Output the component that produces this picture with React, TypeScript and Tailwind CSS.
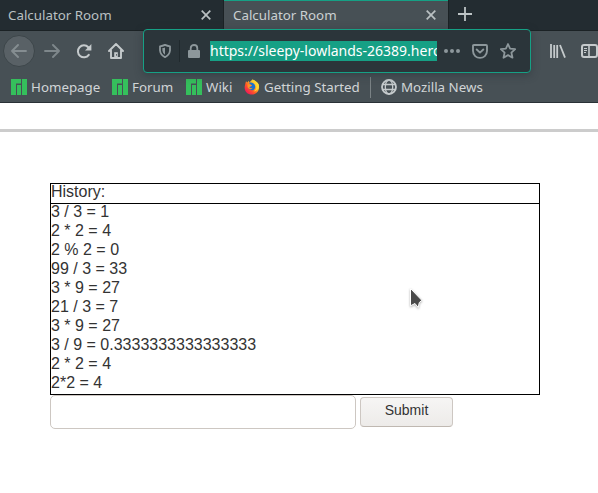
import React from "react";

const history: string[] = [
  "3 / 3 = 1",
  "2 * 2 = 4",
  "2 % 2 = 0",
  "99 / 3 = 33",
  "3 * 9 = 27",
  "21 / 3 = 7",
  "3 * 9 = 27",
  "3 / 9 = 0.3333333333333333",
  "2 * 2 = 4",
  "2*2 = 4",
];

function CloseIcon() {
  return (
    <svg width="10" height="10" viewBox="0 0 10 10" className="shrink-0" stroke="#b9c0c2" strokeWidth="1.7" fill="none">
      <path d="M0.7 0.7L9.3 9.3M9.3 0.7L0.7 9.3" />
    </svg>
  );
}

function ManjaroIcon() {
  return (
    <svg width="16" height="16" viewBox="0 0 16 16" className="shrink-0" fill="#35bf5c">
      <path d="M0 0H10V4.5H5V16H0ZM6 6H10V16H6ZM11 0H16V16H11Z" />
    </svg>
  );
}

function FirefoxIcon() {
  return (
    <svg width="16" height="16" viewBox="0 0 16 16" className="shrink-0">
      <defs>
        <linearGradient id="flame" x1="0.85" y1="0.1" x2="0.15" y2="0.85">
          <stop offset="0" stopColor="#fff044" />
          <stop offset="0.35" stopColor="#ffb52a" />
          <stop offset="0.65" stopColor="#ff5a25" />
          <stop offset="1" stopColor="#f21d55" />
        </linearGradient>
      </defs>
      <path d="M1.4 4.2L2 2.2L3.4 3.6L4.8 1.8L5.3 3.5L8.4 0.4C10 1 13.4 2.8 14.5 5.2C16.6 10.6 12.8 15.5 8 15.5C3 15.5 0.2 11.8 0.7 7.4Z" fill="url(#flame)" />
      <path d="M5.2 3.7C7.4 2.8 10.7 4 11.2 7C11.6 9.8 9.7 11.4 7.7 11.2C5.8 11 4.7 9.7 4.5 8.3L7.3 7.3L8 6.2L5.8 5.3Z" fill="#1871d2" />
      <path d="M3.5 5.2L6 5.5L7.6 6.1L6.7 7.2L5.3 8C5.8 9.4 7.2 9.4 8.7 8.7C7.8 10.6 4.7 10.8 3.6 8.1Z" fill="#ff9325" />
      <path d="M8.4 0.4C9 3 11.8 3.4 12.4 6.3C13 9.5 11.3 11.6 9.1 12.5C13 12.3 15.3 9.1 14.5 5.2C13.5 2.7 10.4 1.3 8.4 0.4Z" fill="#ffda33" />
    </svg>
  );
}

function Bookmark({ icon, label, className }: { icon: React.ReactNode; label: string; className: string }) {
  return (
    <div className={`flex shrink-0 items-center gap-1 ${className}`}>
      {icon}
      <span className="whitespace-nowrap">{label}</span>
    </div>
  );
}

function Tabs() {
  return (
    <div className="flex h-[31px] border-b border-[#1b2225] bg-[#232c31]">
      <div className="flex w-[224px] items-center justify-between border-r border-[#1b2225] pr-3 pl-2">
        <span>Calculator Room</span>
        <CloseIcon />
      </div>
      <div className="flex w-[224px] items-center justify-between border-t border-[#16a085] bg-[#475055] pr-3 pb-px pl-[9px]">
        <span className="text-[#cbd0d2]">Calculator Room</span>
        <CloseIcon />
      </div>
      <div className="flex w-[33px] items-center justify-center border-l border-[#1b2225] pb-[2px]">
        <svg width="14" height="14" viewBox="0 0 14 14" stroke="#bdc4c6" strokeWidth="1.8">
          <path d="M0 7H14M7 0V14" />
        </svg>
      </div>
    </div>
  );
}

function AddressBar() {
  return (
    <div className="relative -mt-[2px] flex h-11 w-[388px] shrink-0 items-center rounded-[4px] border border-[#16a085] bg-[#2b353a] pl-[15px] shadow-[0_2px_9px_rgba(35,44,49,0.45)]">
      <svg width="12" height="14" viewBox="0 0 12 14" fill="none">
        <path d="M1 2.3Q3.7 2 6 0.9Q8.3 2 11 2.3V6.5Q10.5 11 6 13.2Q1.5 11 1 6.5Z" stroke="#8d979b" strokeWidth="1.8" strokeLinejoin="round" />
        <path d="M6 3.4V10.8Q3.7 9.2 3.4 6.4V4.1Q4.8 3.9 6 3.4Z" fill="#8d979b" />
      </svg>
      <div className="ml-2 h-[22px] w-px bg-[#20292d]" />
      <svg width="12" height="14" viewBox="0 0 12 14" className="ml-2" fill="none">
        <rect x="0" y="6" width="12" height="8" rx="1" fill="#8d979b" />
        <path d="M2.7 7V4.2C2.7 -0.1 9.3 -0.1 9.3 4.2V7" stroke="#8d979b" strokeWidth="1.8" />
      </svg>
      <div className="ml-[10px] h-5 w-[227px] overflow-hidden bg-[#16a085] text-[14px] leading-5 whitespace-nowrap text-white">
        https://sleepy-lowlands-26389.herokuapp.com
      </div>
      <svg width="16" height="4" viewBox="0 0 16 4" className="ml-[7px]" fill="#8d979b">
        <circle cx="2" cy="2" r="2" />
        <circle cx="8" cy="2" r="2" />
        <circle cx="14" cy="2" r="2" />
      </svg>
      <svg width="16" height="15" viewBox="0 0 16 15" className="ml-3" fill="none" stroke="#8d979b" strokeWidth="1.9" strokeLinecap="round" strokeLinejoin="round">
        <path d="M2 1H14Q15 1 15 2V6.8C15 16.2 1 16.2 1 6.8V2Q1 1 2 1Z" />
        <path d="M4.7 5.5L8 8.6L11.3 5.5" />
      </svg>
      <svg width="16" height="16" viewBox="0 0 16 16" className="ml-3" fill="none" stroke="#8d979b" strokeWidth="1.8" strokeLinejoin="round">
        <path d="M8 1L10.1 5.6L15.2 6.2L11.4 9.6L12.5 14.7L8 12.1L3.5 14.7L4.6 9.6L0.8 6.2L5.9 5.6Z" />
      </svg>
    </div>
  );
}

function Toolbar() {
  return (
    <div className="flex h-[41px] items-start bg-[#475055]">
      <div className="mt-1 ml-[3px] flex size-8 shrink-0 items-center justify-center rounded-full border border-[#3d464a] bg-[#596166]">
        <svg width="16" height="14" viewBox="0 0 16 14" fill="none" stroke="#858d91" strokeWidth="1.9" strokeLinecap="round" strokeLinejoin="round">
          <path d="M15 7H1M7 1L1 7L7 13" />
        </svg>
      </div>
      <svg width="16" height="14" viewBox="0 0 16 14" className="mt-[13px] ml-[9px] shrink-0" fill="none" stroke="#7e878b" strokeWidth="1.9" strokeLinecap="round" strokeLinejoin="round">
        <path d="M1 7H15M9 1L15 7L9 13" />
      </svg>
      <svg width="16" height="16" viewBox="0 0 16 16" className="mt-3 ml-4 shrink-0" fill="none">
        <path d="M12.8 11.8A6 6 0 1 1 12.3 4.2" stroke="#c5cacc" strokeWidth="2" strokeLinecap="round" />
        <path d="M15.4 1V7.4H9Z" fill="#c5cacc" />
      </svg>
      <svg width="16" height="16" viewBox="0 0 16 16" className="mt-3 ml-4 shrink-0" fill="none" stroke="#c5cacc" strokeWidth="1.9" strokeLinejoin="round" strokeLinecap="round">
        <path d="M1 8L8 1L15 8M3 7.5V15H13V7.5" />
        <path d="M8 14V9.2" strokeWidth="3.6" strokeLinecap="butt" />
        <path d="M8.5 12.6V11.2" stroke="#475055" strokeWidth="1" strokeLinecap="butt" />
      </svg>
      <div className="ml-[19px]">
        <AddressBar />
      </div>
      <svg width="16" height="14" viewBox="0 0 16 14" className="mt-[13px] ml-[19px] shrink-0" fill="none" stroke="#c5cacc" strokeWidth="1.8">
        <path d="M1 0V14M4.2 1V14M7.2 1V14M10 1L15 13.6" />
      </svg>
      <svg width="17" height="14" viewBox="0 0 17 14" className="mt-[13px] ml-[15px] shrink-0" fill="none" stroke="#c5cacc">
        <rect x="1" y="1" width="15" height="12" rx="2" strokeWidth="2" />
        <path d="M8 1V13" strokeWidth="1.6" />
        <path d="M3 4.5H6M3 6.5H6M3 8.5H5" strokeWidth="1" />
      </svg>
    </div>
  );
}

function Bookmarks() {
  return (
    <div className="flex h-[31px] items-center border-b border-[#293136] bg-[#475055] text-[13.33px] text-[#d1d5d7]">
      <Bookmark icon={<ManjaroIcon />} label="Homepage" className="ml-[11px] w-[101px]" />
      <Bookmark icon={<ManjaroIcon />} label="Forum" className="w-[74px]" />
      <Bookmark icon={<ManjaroIcon />} label="Wiki" className="w-[58px]" />
      <Bookmark icon={<FirefoxIcon />} label="Getting Started" className="w-[126px]" />
      <div className="h-[21px] w-px bg-[#7a8285]" />
      <Bookmark
        className="ml-[10px]"
        label="Mozilla News"
        icon={
          <svg width="16" height="16" viewBox="0 0 16 16" className="shrink-0" fill="none" stroke="#c5cacc" strokeWidth="1.3">
            <circle cx="8" cy="8" r="7" strokeWidth="1.8" />
            <ellipse cx="8" cy="8" rx="3.7" ry="7" />
            <path d="M1.5 5.5H14.5M1.5 10.5H14.5" />
          </svg>
        }
      />
    </div>
  );
}

export default function App() {
  return (
    <div className="relative h-[493px] w-[598px] overflow-hidden bg-white">
      <header className="font-['Noto_Sans',sans-serif] text-[13.33px] leading-[18px] text-[#b9c0c2]">
        <Tabs />
        <Toolbar />
        <Bookmarks />
      </header>
      <main className="font-['Liberation_Sans',Arial,sans-serif] text-[#333333]">
        <div className="mt-[26px] h-[3px] bg-[#cccccc]" />
        <section className="mt-[51px] ml-[50px] h-[212px] w-[490px] border border-black text-base leading-[19px]">
          <div className="h-5 border-b border-black leading-[15px]">History:</div>
          <ul className="-mt-[2px]">
            {history.map((entry, i) => (
              <li key={i}>{entry}</li>
            ))}
          </ul>
        </section>
        <form className="ml-[50px] flex items-start gap-1" onSubmit={(e) => e.preventDefault()}>
          <input type="text" aria-label="Expression" className="h-[34px] w-[306px] rounded-[5px] border border-[#cdc7c2] bg-white outline-none" />
          <button type="submit" className="mt-[2px] h-[30px] w-[93px] rounded-[4px] border border-[#cdc7c2] border-b-[#bfb8b1] bg-linear-to-b from-[#f6f5f4] to-[#edebe9] pb-[5px] text-sm leading-5">
            Submit
          </button>
        </form>
      </main>
      <svg width="14" height="22" viewBox="0 0 14 22" className="absolute top-[288px] left-[410px] drop-shadow-[0_1px_1px_rgba(0,0,0,0.3)]">
        <path d="M0.5 0.5V17.8L5 15.5L8.2 19.5L9.3 14.5L11.8 12.3Z" fill="#4a4a4a" stroke="#fff" strokeWidth="1" />
      </svg>
    </div>
  );
}
